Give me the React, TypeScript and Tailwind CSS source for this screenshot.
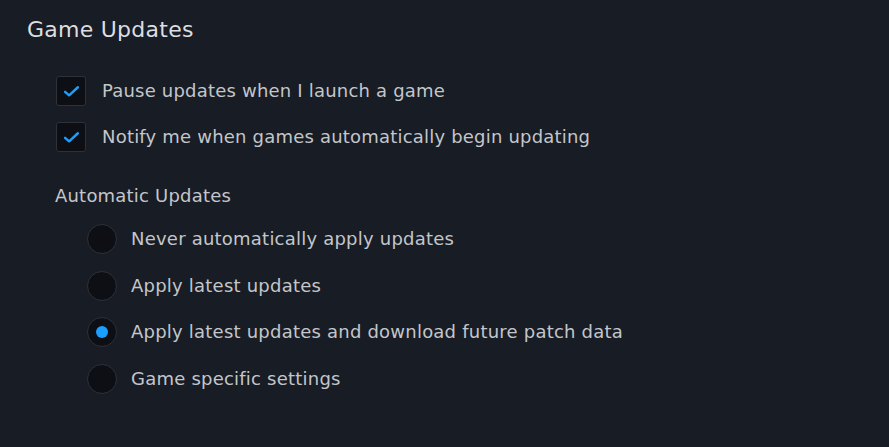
const checks = [
  "Pause updates when I launch a game",
  "Notify me when games automatically begin updating",
];

const radios = [
  { label: "Never automatically apply updates", on: false },
  { label: "Apply latest updates", on: false },
  { label: "Apply latest updates and download future patch data", on: true },
  { label: "Game specific settings", on: false },
];

function CheckBox() {
  return (
    <div className="flex h-[30px] w-[30px] shrink-0 items-center justify-center rounded-[3px] border border-[#2d3139] bg-[#0d0f14]">
      <svg viewBox="0 0 16 16" width="17" height="17">
        <path
          d="M2 8.3 L5.8 11.6 L14 4"
          fill="none"
          stroke="#1a9fff"
          strokeWidth="2.3"
          strokeLinecap="round"
          strokeLinejoin="round"
        />
      </svg>
    </div>
  );
}

function Radio({ on }: { on: boolean }) {
  return (
    <div className="flex h-[30px] w-[30px] shrink-0 items-center justify-center rounded-full border border-[#2d3139] bg-[#0d0f14]">
      {on && <div className="h-[12px] w-[12px] rounded-full bg-[#1a9fff]" />}
    </div>
  );
}

export default function App() {
  return (
    <div
      className="h-[447px] w-[889px] bg-[#181c24] pl-[27px] pt-[15px] text-[#c3c6cb]"
      style={{ fontFamily: '"DejaVu Sans", sans-serif' }}
    >
      <h1 className="text-[22px] leading-[30px] tracking-[0.25px] text-[#dcdee1]">Game Updates</h1>
      <div className="mt-[31px] flex flex-col gap-[16px] pl-[29px]">
        {checks.map((c) => (
          <label key={c} className="flex items-center gap-[16px] text-[18px] leading-[24px] tracking-[0.2px]">
            <CheckBox />
            <span>{c}</span>
          </label>
        ))}
      </div>
      <div className="mt-[32px] pl-[28px] text-[18px] leading-[24px] tracking-[0.2px]">Automatic Updates</div>
      <div className="mt-[16px] flex flex-col gap-[16.7px] pl-[60px]">
        {radios.map((r) => (
          <label key={r.label} className="flex items-center gap-[14px] text-[18px] leading-[24px] tracking-[0.22px]">
            <Radio on={r.on} />
            <span>{r.label}</span>
          </label>
        ))}
      </div>
    </div>
  );
}
